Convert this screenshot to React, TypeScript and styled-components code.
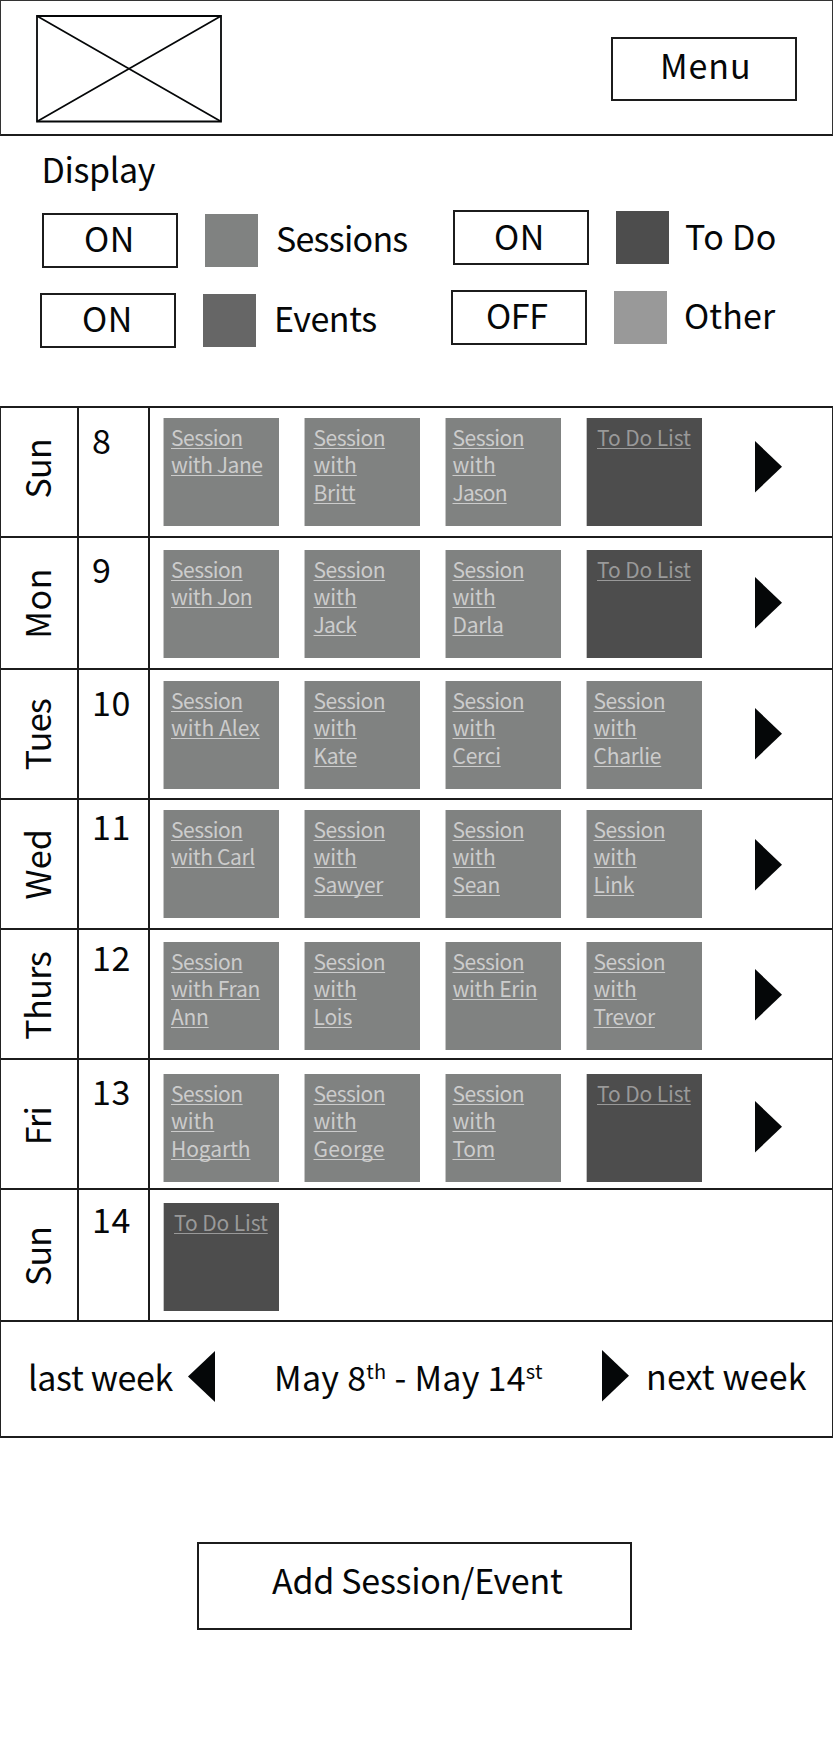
import React from 'react';
import styled, { createGlobalStyle } from 'styled-components';

const INK = '#050708';
const LINE = '#1c1c1c';
const SESSION = '#808281';
const TODO = '#4d4d4d';

const GlobalStyle = createGlobalStyle`
  * { box-sizing: border-box; }
  body { margin: 0; background: #fff; }
`;

const Page = styled.div`
  width: 833px;
  height: 1756px;
  overflow: hidden;
  display: flex;
  flex-direction: column;
  color: ${INK};
  background: #fff;
  font-family: 'Noto Sans CJK SC', 'Noto Sans', sans-serif;
  font-size: 34px;
  line-height: 40px;
`;

const Header = styled.header`
  flex: none;
  height: 136px;
  display: flex;
  justify-content: space-between;
  border: 1px solid #333;
  border-bottom: 2px solid ${LINE};
  padding: 14px 35px 0;
`;

const Logo = styled.svg`
  width: 186px;
  height: 108px;
`;

const Text = styled.span<{ $track?: number }>`
  display: block;
  white-space: nowrap;
  letter-spacing: ${(p) => p.$track ?? -0.4}px;
`;

const Box = styled.button<{ $w: number; $h: number; $left: number; $top: number }>`
  flex: none;
  width: ${(p) => p.$w}px;
  height: ${(p) => p.$h}px;
  padding: ${(p) => p.$top}px 0 0 ${(p) => p.$left}px;
  display: flex;
  align-items: flex-start;
  background: #fff;
  border: 2px solid ${LINE};
  border-radius: 0;
  color: inherit;
  font: inherit;
  text-align: left;
`;

const MenuSlot = styled.div`
  padding-top: 22px;
`;

const Display = styled.section`
  flex: none;
  height: 270px;
  padding: 13px 0 0 41.5px;
`;

const Columns = styled.div`
  display: flex;
  margin-left: -1.5px;
`;

const Column = styled.div<{ $w: number; $top: number }>`
  width: ${(p) => p.$w}px;
  padding-top: ${(p) => p.$top}px;
  display: flex;
  flex-direction: column;
  gap: 25px;
`;

const Toggle = styled.div<{ $indent: number }>`
  height: 55px;
  padding-left: ${(p) => p.$indent}px;
  display: flex;
`;

const Swatch = styled.div<{ $color: string }>`
  width: 53px;
  height: 53px;
  margin: 1px 0 0 27px;
  background: ${(p) => p.$color};
`;

const ToggleName = styled.div<{ $top: number; $left: number }>`
  padding: ${(p) => p.$top}px 0 0 ${(p) => p.$left}px;
`;

const Week = styled.section`
  flex: none;
  border: solid #222;
  border-width: 0 1px;
`;

const Row = styled.div<{ $h: number }>`
  height: ${(p) => p.$h}px;
  border-top: 2px solid ${LINE};
  display: grid;
  grid-template-columns: 78px 71px 605px 1fr;
`;

const DayCell = styled.div<{ $top: number }>`
  border-right: 2px solid ${LINE};
  padding: ${(p) => p.$top}px 0 0 16px;
`;

const DayName = styled(Text)`
  width: 40px;
  writing-mode: vertical-rl;
  transform: rotate(180deg);
`;

const DateCell = styled.div<{ $top: number }>`
  border-right: 2px solid ${LINE};
  padding: ${(p) => p.$top}px 0 0 13px;
`;

const Cards = styled.div<{ $top: number }>`
  display: flex;
  gap: 25px;
  padding: ${(p) => p.$top}px 0 0 13px;
`;

const Card = styled.div<{ $todo: boolean; $left: number }>`
  width: 116px;
  height: 108px;
  padding: 5.5px 0 0 ${(p) => p.$left}px;
  border-left: 1px solid #c4c4c4;
  background: ${(p) => (p.$todo ? TODO : SESSION)};
  color: ${(p) => (p.$todo ? '#999' : '#ccc')};
  font-size: 21px;
  line-height: 27.5px;
`;

const CardLine = styled.a<{ $track: number }>`
  display: table;
  white-space: nowrap;
  letter-spacing: ${(p) => p.$track}px;
  text-decoration: underline;
  text-decoration-thickness: 1px;
  text-underline-offset: 2px;
  text-decoration-skip-ink: none;
`;

const ArrowCell = styled.div<{ $top: number }>`
  padding-top: ${(p) => p.$top}px;
`;

const ArrowSvg = styled.svg`
  display: block;
  width: 27px;
  height: 52px;
`;

const Pager = styled.nav`
  height: 118px;
  border-top: 2px solid ${LINE};
  border-bottom: 2px solid ${LINE};
  display: flex;
  align-items: flex-start;
`;

const Slot = styled.div<{ $w: number; $top: number; $left?: number }>`
  width: ${(p) => p.$w}px;
  flex: none;
  padding: ${(p) => p.$top}px 0 0 ${(p) => p.$left ?? 0}px;
`;

const Sup = styled.sup`
  font-size: 20px;
  line-height: 0;
  vertical-align: 12px;
`;

const Footer = styled.footer`
  padding: 104px 0 0 197px;
`;

const Arrow = ({ left = false }: { left?: boolean }) => (
  <ArrowSvg viewBox="0 0 27 52">
    <path d={left ? 'M27 0V51L0 25.5Z' : 'M0 0V51.5L27 25.75Z'} fill={INK} />
  </ArrowSvg>
);

type ToggleProps = {
  state: string; name: string; color: string; indent: number;
  left: number; top: number; nameLeft?: number; track?: number; nameTrack?: number;
};

const ToggleItem = ({ state, name, color, indent, left, top, nameLeft = 18, track, nameTrack }: ToggleProps) => (
  <Toggle $indent={indent}>
    <Box $w={136} $h={55} $left={left} $top={top - 2}>
      <Text $track={track}>{state}</Text>
    </Box>
    <Swatch $color={color} />
    <ToggleName $top={top} $left={nameLeft}>
      <Text $track={nameTrack}>{name}</Text>
    </ToggleName>
  </Toggle>
);

type Day = {
  day: string; date: string; h: number; track: number;
  dayTop: number; dateTop: number; cardTop: number; arrowTop?: number;
  cards: string[][];
};

const TODO_LIST = ['To Do List'];

const days: Day[] = [
  { day: 'Sun', date: '8', h: 130, track: -0.7, dayTop: 31, dateTop: 12, cardTop: 10, arrowTop: 33,
    cards: [['Session', 'with Jane'], ['Session', 'with', 'Britt'], ['Session', 'with', 'Jason'], TODO_LIST] },
  { day: 'Mon', date: '9', h: 132, track: 0.6, dayTop: 30, dateTop: 11, cardTop: 12, arrowTop: 39,
    cards: [['Session', 'with Jon'], ['Session', 'with', 'Jack'], ['Session', 'with', 'Darla'], TODO_LIST] },
  { day: 'Tues', date: '10', h: 130, track: -0.7, dayTop: 29, dateTop: 12, cardTop: 11, arrowTop: 38,
    cards: [['Session', 'with Alex'], ['Session', 'with', 'Kate'], ['Session', 'with', 'Cerci'], ['Session', 'with', 'Charlie']] },
  { day: 'Wed', date: '11', h: 130, track: 0.2, dayTop: 29, dateTop: 6, cardTop: 10, arrowTop: 39,
    cards: [['Session', 'with Carl'], ['Session', 'with', 'Sawyer'], ['Session', 'with', 'Sean'], ['Session', 'with', 'Link']] },
  { day: 'Thurs', date: '12', h: 130, track: -0.6, dayTop: 22, dateTop: 7, cardTop: 12, arrowTop: 39,
    cards: [['Session', 'with Fran', 'Ann'], ['Session', 'with', 'Lois'], ['Session', 'with Erin'], ['Session', 'with', 'Trevor']] },
  { day: 'Fri', date: '13', h: 130, track: -0.8, dayTop: 47, dateTop: 11, cardTop: 14, arrowTop: 41,
    cards: [['Session', 'with', 'Hogarth'], ['Session', 'with', 'George'], ['Session', 'with', 'Tom'], TODO_LIST] },
  { day: 'Sun', date: '14', h: 132, track: -0.9, dayTop: 37, dateTop: 9, cardTop: 13,
    cards: [TODO_LIST] },
];

const cardIndent = [7, 8.5, 6.5, 6.5];

// Letter spacing per phrase; anything absent uses the default.
const cardTrack: Record<string, number> = {
  Session: -0.5,
  'with Jane': -0.45,
  'with Jon': -0.45,
  'with Alex': 0,
  'with Carl': -0.4,
  with: 0,
  Jason: -0.85,
  Jack: -0.7,
  Sawyer: -0.4,
  Hogarth: -0.1,
  George: 0.2,
  'To Do List': -0.1,
};

export default function App() {
  return (
    <Page>
      <GlobalStyle />
      <Header>
        <Logo viewBox="0 0 186 108" fill="none" stroke={INK}>
          <path d="M1 1H185V106.5H1Z" strokeWidth="1.8" />
          <path d="M1 1L185 106.5M185 1L1 106.5" strokeWidth="1.7" />
        </Logo>
        <MenuSlot>
          <Box $w={186} $h={64} $left={47} $top={6}>
            <Text $track={0.9}>Menu</Text>
          </Box>
        </MenuSlot>
      </Header>

      <Display>
        <Text>Display</Text>
        <Columns>
          <Column $w={411} $top={24}>
            <ToggleItem state="ON" name="Sessions" color={SESSION} indent={2} left={40} top={5} track={0.4} nameTrack={-0.75} />
            <ToggleItem state="ON" name="Events" color="#666" indent={0} left={40} top={5} track={0.4} />
          </Column>
          <Column $w={380} $top={21}>
            <ToggleItem state="ON" name="To Do" color={TODO} indent={2} left={39} top={6} nameLeft={16} track={0.4} nameTrack={0.3} />
            <ToggleItem state="OFF" name="Other" color="#999" indent={0} left={33} top={5} nameLeft={17} nameTrack={0.1} />
          </Column>
        </Columns>
      </Display>

      <Week>
        {days.map((d) => (
          <Row key={d.date} $h={d.h}>
            <DayCell $top={d.dayTop}>
              <DayName $track={d.track}>{d.day}</DayName>
            </DayCell>
            <DateCell $top={d.dateTop}>
              <Text $track={0.7}>{d.date}</Text>
            </DateCell>
            <Cards $top={d.cardTop}>
              {d.cards.map((lines, i) => {
                const todo = lines === TODO_LIST;
                return (
                  <Card key={i} $todo={todo} $left={todo ? 10 : cardIndent[i]}>
                    {lines.map((line) => (
                      <CardLine key={line} $track={cardTrack[line] ?? -0.25}>{line}</CardLine>
                    ))}
                  </Card>
                );
              })}
            </Cards>
            {d.arrowTop !== undefined && (
              <ArrowCell $top={d.arrowTop}>
                <Arrow />
              </ArrowCell>
            )}
          </Row>
        ))}
        <Pager>
          <Slot $w={187} $top={35} $left={27}>
            <Text $track={-0.35}>last week</Text>
          </Slot>
          <Slot $w={86} $top={29}>
            <Arrow left />
          </Slot>
          <Slot $w={328} $top={35}>
            <Text $track={0.27}>May 8<Sup>th</Sup> - May 14<Sup>st</Sup></Text>
          </Slot>
          <Slot $w={44} $top={28}>
            <Arrow />
          </Slot>
          <Slot $w={180} $top={34}>
            <Text $track={0.15}>next week</Text>
          </Slot>
        </Pager>
      </Week>

      <Footer>
        <Box $w={435} $h={88} $left={73} $top={16}>
          <Text $track={-0.27}>Add Session/Event</Text>
        </Box>
      </Footer>
    </Page>
  );
}
